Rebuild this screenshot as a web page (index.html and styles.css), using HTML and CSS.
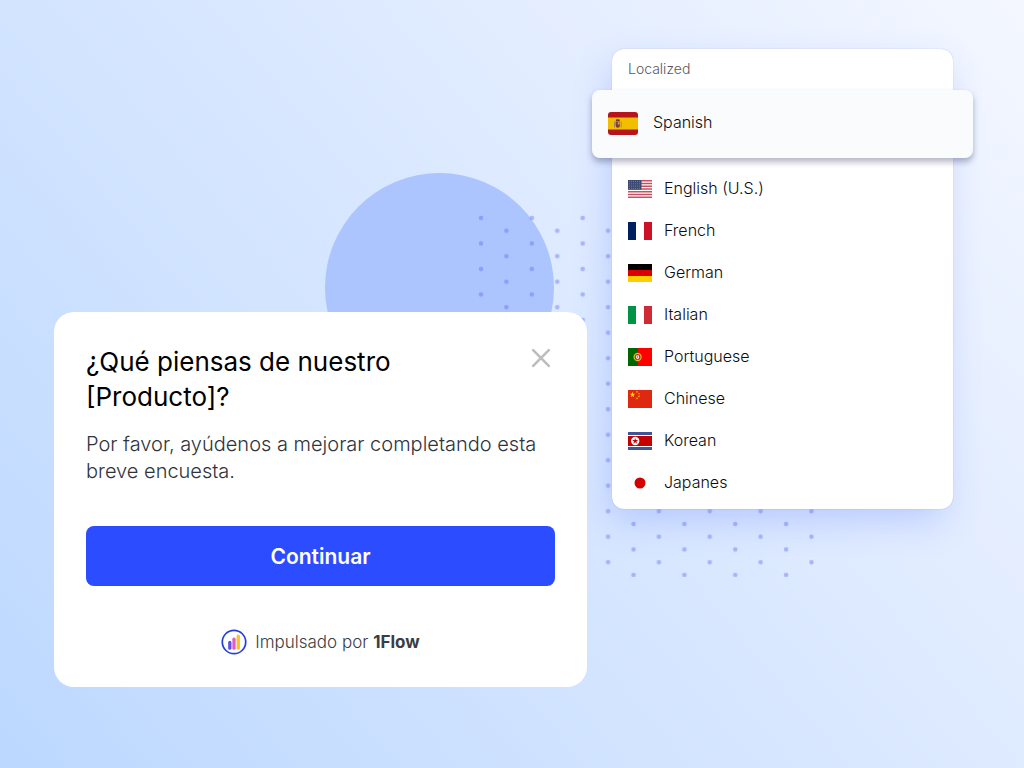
FILE: index.html
```html
<!DOCTYPE html>
<html lang="es">
<head>
    <meta charset="UTF-8">
    <meta name="viewport" content="width=device-width, initial-scale=1.0">
    <title>Encuesta</title>
    <link rel="stylesheet" href="styles.css">
</head>
<body>
    <div class="circle"></div>
    <svg class="dots" width="340" height="364" aria-hidden="true">
        <defs>
            <pattern id="dotPattern" width="50.85" height="25.5" patternUnits="userSpaceOnUse">
                <circle cx="5" cy="5" r="2.3" fill="#5b68f3"/>
                <circle cx="30.4" cy="17.7" r="2.3" fill="#5b68f3"/>
            </pattern>
        </defs>
        <rect width="340" height="364" fill="url(#dotPattern)"/>
    </svg>

    <main class="container">
        <section class="survey">
            <div class="survey-head">
                <h2>¿Qué piensas de nuestro [Producto]?</h2>
                <button type="button" class="close" aria-label="Cerrar">
                    <svg width="28" height="28" viewBox="0 0 28 28">
                        <path d="M6.2 6.2l15.6 15.6M21.8 6.2L6.2 21.8" stroke="#bdbdbd" stroke-width="2.6" stroke-linecap="round"/>
                    </svg>
                </button>
            </div>
            <p class="survey-text">Por favor, ayúdenos a mejorar completando esta breve encuesta.</p>
            <button type="button" class="continue">Continuar</button>
            <div class="powered">
                <svg width="26" height="26" viewBox="0 0 26 26" aria-hidden="true">
                    <circle cx="13" cy="13" r="11.7" fill="#fff" stroke="#2340dc" stroke-width="1.7"/>
                    <path d="M8.8 13.4v5.8" stroke="#5a50ea" stroke-width="3.3" stroke-linecap="round"/>
                    <path d="M13 10.2v9" stroke="#e45cc0" stroke-width="3.3" stroke-linecap="round"/>
                    <path d="M17.3 7.2v12" stroke="#fbc22b" stroke-width="3.3" stroke-linecap="round"/>
                </svg>
                <span>Impulsado por <b>1Flow</b></span>
            </div>
        </section>

        <section class="languages">
            <h3>Localized</h3>
            <button type="button" class="language selected">
                <svg class="flag" viewBox="0 0 30 23">
                    <rect width="30" height="23" fill="#b5151b"/>
                    <rect y="5.5" width="30" height="12" fill="#f2be00"/>
                    <path d="M6 9.5h1v6H6zM12.7 9.5h1v6h-1z" fill="#a78a55"/>
                    <path d="M7.6 9.5h4.4v4q0 2.2-2.2 2.2t-2.2-2.2z" fill="#87401f"/>
                    <path d="M7.8 9l.4-1.700h3.200l.4 1.700z" fill="#6e3c1c"/>
                    <path d="M9.800 10.200h1.800v2.200H9.800z" fill="#d7a77b"/>
                </svg>
                <span>Spanish</span>
            </button>
            <ul>
                <li><button type="button" class="language">
                    <svg class="flag" viewBox="0 0 24 18">
                        <rect width="24" height="18" fill="#fff"/>
                        <path d="M0 .7h24M0 3.500h24M0 6.200h24M0 9h24M0 11.800h24M0 14.500h24M0 17.300h24" stroke="#c6505f" stroke-width="1.4"/>
                        <rect width="13.500" height="9.700" fill="#3c4a72"/>
                        <path d="M1 1.500h12M1 3.800h12M1 6.100h12M1 8.400h12" stroke="#8d96b4" stroke-width=".8" stroke-dasharray=".8 1.200"/>
                    </svg>
                    <span>English (U.S.)</span>
                </button></li>
                <li><button type="button" class="language">
                    <svg class="flag" viewBox="0 0 24 18">
                        <rect width="24" height="18" fill="#fff"/>
                        <rect width="8" height="18" fill="#00205f"/>
                        <rect x="16" width="8" height="18" fill="#ce1126"/>
                    </svg>
                    <span>French</span>
                </button></li>
                <li><button type="button" class="language">
                    <svg class="flag" viewBox="0 0 24 18">
                        <rect width="24" height="6" fill="#000"/>
                        <rect y="6" width="24" height="6" fill="#d80000"/>
                        <rect y="12" width="24" height="6" fill="#ffce00"/>
                    </svg>
                    <span>German</span>
                </button></li>
                <li><button type="button" class="language">
                    <svg class="flag" viewBox="0 0 24 18">
                        <rect width="24" height="18" fill="#fff"/>
                        <rect width="8" height="18" fill="#009246"/>
                        <rect x="16" width="8" height="18" fill="#ce2b37"/>
                    </svg>
                    <span>Italian</span>
                </button></li>
                <li><button type="button" class="language">
                    <svg class="flag" viewBox="0 0 24 18">
                        <rect width="24" height="18" fill="#f00"/>
                        <rect width="10" height="18" fill="#060"/>
                        <circle cx="9.600" cy="9" r="3.500" fill="none" stroke="#d9bd24" stroke-width="1.300"/>
                        <path d="M7.700 7h3.800v2.600q0 1.900-1.900 1.900t-1.900-1.900z" fill="#fff" stroke="#d21f14" stroke-width=".9"/>
                        <circle cx="9.600" cy="9" r=".7" fill="#345a9d"/>
                    </svg>
                    <span>Portuguese</span>
                </button></li>
                <li><button type="button" class="language">
                    <svg class="flag" viewBox="0 0 24 18">
                        <rect width="24" height="18" fill="#de2910"/>
                        <path d="M4.500 1.800l.7 2h2.100l-1.700 1.300.6 2.100-1.700-1.200-1.700 1.200.6-2.100-1.700-1.300h2.100z" fill="#ffde00"/>
                        <g fill="#f6ab10">
                            <circle cx="9" cy="1.900" r=".8"/>
                            <circle cx="11" cy="3.800" r=".8"/>
                            <circle cx="11" cy="6.400" r=".8"/>
                            <circle cx="9" cy="8.400" r=".8"/>
                        </g>
                    </svg>
                    <span>Chinese</span>
                </button></li>
                <li><button type="button" class="language">
                    <svg class="flag" viewBox="0 0 24 18">
                        <rect width="24" height="18" fill="#fff"/>
                        <rect width="24" height="3" fill="#3e5698"/>
                        <rect y="15" width="24" height="3" fill="#3e5698"/>
                        <rect y="4" width="24" height="10" fill="#c60000"/>
                        <circle cx="7.200" cy="9" r="4.200" fill="#fff"/>
                        <path d="M7.200 5.900l.7 2.200h2.300l-1.800 1.400.7 2.200-1.900-1.400-1.900 1.400.7-2.200-1.800-1.400h2.300z" fill="#c60000"/>
                    </svg>
                    <span>Korean</span>
                </button></li>
                <li><button type="button" class="language">
                    <svg class="flag" viewBox="0 0 24 18">
                        <rect width="24" height="18" fill="#fff"/>
                        <circle cx="12" cy="9" r="5.500" fill="#d30000"/>
                    </svg>
                    <span>Japanes</span>
                </button></li>
            </ul>
        </section>
    </main>
</body>
</html>
```
FILE: styles.css
```css
* {
    box-sizing: border-box;
}

body {
    font-family: Inter, "Liberation Sans", sans-serif;
    background: linear-gradient(50deg, #bcd8ff, #d8e7ff 50%, #f4f7ff);
    margin: 0;
    min-height: 100vh;
    position: relative;
}

button {
    font-family: inherit;
    border: none;
    cursor: pointer;
}

svg {
    display: block;
    flex-shrink: 0;
}

/* Background shapes */
.circle {
    position: absolute;
    left: 325px;
    top: 173px;
    width: 229px;
    height: 229px;
    border-radius: 50%;
    background-color: #adc5ff;
}

.dots {
    position: absolute;
    left: 476px;
    top: 213px;
    opacity: 0.4;
}

.container {
    position: relative;
    display: grid;
    grid-template-columns: 533fr 341fr;
    gap: 25px;
    align-items: start;
    padding: 49px 71px 49px 54px;
}

/* Survey card */
.survey {
    position: relative;
    z-index: 1;
    background: #ffffff;
    border-radius: 20px;
    padding: 32px;
    margin-top: 263px;
}

.survey-head {
    display: flex;
    justify-content: space-between;
    align-items: flex-start;
}

h2 {
    margin: 0;
    max-width: 360px;
    font-size: 26px;
    line-height: 35px;
    font-weight: 400;
    color: #000;
}

.close {
    padding: 0;
    background: none;
}

.survey-text {
    margin: 17px 0 41px;
    font-size: 20px;
    line-height: 27px;
    font-weight: 300;
    color: #2f343c;
}

.continue {
    width: 100%;
    height: 60px;
    border-radius: 8px;
    background-color: #2c4dff;
    color: white;
    font-size: 21px;
    font-weight: 600;
}

.powered {
    display: flex;
    justify-content: center;
    align-items: center;
    gap: 8px;
    margin-top: 43px;
    font-size: 17px;
    line-height: 26px;
    font-weight: 300;
    color: #3c3d42;
}

.powered b {
    font-weight: 700;
}

/* Language list */
.languages {
    background: #ffffff;
    border-radius: 12px;
    padding: 0 16px 6px;
    box-shadow: 0 0 1px rgba(60, 70, 110, 0.4), -5px 14px 36px -4px rgba(90, 120, 255, 0.3);
}

h3 {
    margin: 0;
    height: 41px;
    font-size: 14px;
    line-height: 39px;
    font-weight: 300;
    color: #55585f;
}

ul {
    list-style: none;
    margin: 9px 0 0;
    padding: 0;
}

.language {
    display: flex;
    align-items: center;
    gap: 12px;
    width: 100%;
    height: 42px;
    padding: 0;
    background: none;
    color: #0c0d10;
    font-size: 16px;
    font-weight: 300;
}

.flag {
    width: 24px;
    height: 18px;
    margin-top: 2px;
}

/* Wider than the list, sticks out 20px on each side */
.selected {
    position: relative;
    width: calc(100% + 72px);
    height: 68px;
    margin: 0 -36px;
    padding: 0 16px 4px;
    gap: 15px;
    border-radius: 8px;
    background-color: #f9fbfd;
    box-shadow: 0 4px 6px rgba(40, 45, 90, 0.35);
}

.selected .flag {
    width: 30px;
    height: 23px;
    border-radius: 3px;
}
```
